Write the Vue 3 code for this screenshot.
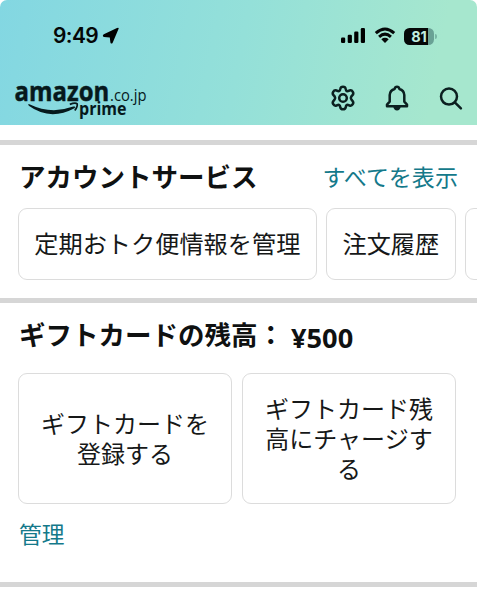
<template>
  <div class="screen">
    <header class="header">
      <!-- Status bar -->
      <div class="status">
        <div class="clock">
          <span class="time">9:49</span>
          <svg class="location" width="18" height="18" viewBox="0 0 18 18">
            <path d="M16.6 1.8 L10.8 15.4 Q9.4 17.8 8.4 15.4 L7.8 10.4 L2 10 Q-0.2 8.8 1.8 7.2 L15 1 Q17.2 0.2 16.6 1.8Z" />
          </svg>
        </div>
        <div class="indicators">
          <svg width="26" height="18" viewBox="0 0 26 18">
            <rect x="1" y="10.5" width="4.2" height="5.5" rx="1.2" />
            <rect x="7.7" y="7.8" width="4.2" height="8.2" rx="1.2" />
            <rect x="14.2" y="4.5" width="4.2" height="11.5" rx="1.2" />
            <rect x="20.8" y="1" width="4.2" height="15" rx="1.2" />
          </svg>
          <svg class="wifi" width="22" height="18" viewBox="0 0 22 18">
            <path d="M1.8 6.2 Q11 -2.1 20.2 6.2" />
            <path d="M5.1 9.8 Q11 4.5 16.9 9.8" />
            <path class="solid" d="M7.3 12.3 Q11 9.4 14.7 12.3 L11 16Z" />
          </svg>
          <div class="battery">
            <span class="level">81</span>
          </div>
          <i class="battery-tip"></i>
        </div>
      </div>

      <!-- Logo and actions -->
      <div class="nav">
        <svg class="logo" width="136" height="42" viewBox="0 0 136 42">
          <text class="brand" x="0.6" y="23" textLength="94.6" lengthAdjust="spacingAndGlyphs">amazon</text>
          <text class="domain" x="96" y="23.4" textLength="36.5" lengthAdjust="spacingAndGlyphs">.co.jp</text>
          <text class="prime" x="65" y="36.6" textLength="47.5" lengthAdjust="spacingAndGlyphs">prime</text>
          <path d="M15.4 26.3 Q37 36.7 59.3 28.6 Q62.5 27.8 60.5 30.2 Q36 43.2 14.8 27.8 Q13.4 25.5 15.4 26.3Z" />
          <path class="tip" d="M55.8 26.4 Q61.5 24.2 63.2 25.9 Q63.8 28.4 60.8 32.6" />
        </svg>
        <div class="actions">
          <svg width="28" height="28" viewBox="0 0 28 28">
            <path d="M11.2 5.1 C11.8 1.9 16.2 1.9 16.8 5.1 L17.1 6.3 Q17.7 7.4 19 7.1 L20.5 6.5 C23.4 5.6 25.5 9.2 23.3 11.3 L22.4 12.3 Q21.3 14 22.4 15.5 L23.3 16.6 C25.5 18.8 23.4 22.4 20.5 21.5 L19 20.9 Q17.6 20.6 17.1 21.8 L16.8 23 C16.2 26.1 11.8 26.1 11.2 23 L10.9 21.8 Q10.3 20.6 9 20.9 L7.5 21.5 C4.6 22.4 2.5 18.8 4.7 16.6 L5.6 15.5 Q6.7 14 5.6 12.3 L4.7 11.3 C2.5 9.2 4.6 5.6 7.5 6.5 L9 7.1 Q10.4 7.4 10.9 6.3Z" />
            <circle cx="14" cy="14" r="3.8" />
          </svg>
          <svg width="28" height="28" viewBox="0 0 28 28">
            <path d="M4 22.3 V20.6 L6.7 17.6 V11 Q7 6.4 11.6 5 Q12.1 2.7 14 2.7 Q15.9 2.7 16.4 5 Q21 6.4 21.3 11 V17.6 L24 20.6 V22.3Z" />
            <path class="clapper" d="M10.2 22.8 H17.8 Q17 26.4 14 26.4 Q11 26.4 10.2 22.8Z" />
          </svg>
          <svg width="28" height="28" viewBox="0 0 28 28">
            <circle cx="12" cy="12.6" r="8" />
            <path d="M17.8 18.3 L23.9 24.4" />
          </svg>
        </div>
      </div>
    </header>

    <section class="account">
      <div class="title-row">
        <h2>アカウントサービス</h2>
        <a class="link all">すべてを表示</a>
      </div>
      <div class="chips">
        <button v-for="item in services" :key="item" class="chip">{{ item }}</button>
        <button class="chip cut"></button>
      </div>
    </section>

    <section class="gift">
      <div class="balance">
        <h2>ギフトカードの残高：</h2>
        <span class="amount">¥500</span>
      </div>
      <div class="cards">
        <button v-for="item in giftActions" :key="item" class="card">{{ item }}</button>
      </div>
      <a class="link manage">管理</a>
    </section>
    <div class="divider"></div>
  </div>
</template>

<script setup>
const services = ['定期おトク便情報を管理', '注文履歴']
const giftActions = ['ギフトカードを登録する', 'ギフトカード残高にチャージする']
</script>

<style>
body {
  margin: 0;
  background: #fff;
}
</style>

<style scoped>
.screen {
  width: 477px;
  height: 600px;
  overflow: hidden;
  background: #fff;
  color: #0f1111;
  font-family: "Open Sans", "Noto Sans CJK JP", sans-serif;
}

.header {
  box-sizing: border-box;
  height: 125px;
  padding-top: 22px;
  border-radius: 7px 7px 0 0;
  background: linear-gradient(101deg, #83d7e2 0%, #94e0d9 50%, #a6e7ce 90%);
}

/* Status bar */
.status {
  display: flex;
  justify-content: space-between;
  align-items: center;
  height: 28px;
  padding: 0 40px 0 53px;
}

.clock,
.indicators {
  display: flex;
  align-items: center;
}

.time {
  font: 600 21px/28px Inter, sans-serif;
  color: #050808;
  width: 45px;
  letter-spacing: -0.6px;
}

.location {
  margin-left: 4px;
}

.wifi {
  margin: 0 8px 0 8px;
  fill: none;
  stroke: #050808;
  stroke-width: 3;
}

.wifi .solid {
  fill: #050808;
  stroke: none;
}

.battery {
  width: 30px;
  height: 17px;
  border-radius: 5.5px;
  background: linear-gradient(90deg, #050808 81%, #69a195 81%);
  text-align: center;
}

.level {
  display: block;
  font: 700 14.5px/17px Inter, sans-serif;
  color: #c2eee0;
}

.battery-tip {
  width: 2px;
  height: 5px;
  margin-left: 1px;
  border-radius: 0 2px 2px 0;
  background: #79b5a5;
}

/* Logo and actions */
.nav {
  display: flex;
  justify-content: space-between;
  padding: 28px 12px 0 14px;
}

.logo {
  overflow: visible;
  fill: #06191c;
}

.brand {
  font: 700 27px "Open Sans", sans-serif;
  stroke: #06191c;
  stroke-width: 0.5;
}

.domain {
  font: 400 16.5px "Open Sans", sans-serif;
}

.prime {
  font: 700 17px "Open Sans", sans-serif;
}

.tip {
  fill: none;
  stroke: #06191c;
  stroke-width: 1.7;
}

.actions {
  display: flex;
  gap: 26px;
  padding-top: 6px;
}

.actions svg {
  fill: none;
  stroke: #0b2020;
  stroke-width: 2.5;
  stroke-linejoin: round;
  stroke-linecap: round;
}

.actions .clapper {
  fill: #0b2020;
  stroke: none;
}

/* Sections */
section {
  box-sizing: border-box;
  border-top: 5px solid #d6d6d6;
}

h2 {
  margin: 0;
  font-size: 26.5px;
  line-height: 36px;
  font-weight: 700;
  white-space: nowrap;
}

.link {
  font-size: 22.7px;
  line-height: 32px;
  color: #14798a;
}

.account {
  height: 158px;
  margin-top: 15px;
  padding: 14px 0 0 18px;
}

.title-row {
  display: flex;
  justify-content: space-between;
  align-items: center;
  height: 36px;
  padding: 0 19px 0 1px;
}

.all {
  letter-spacing: 0.1px;
  font-size: 23px;
}

.chips {
  display: flex;
  gap: 9.5px;
  margin-top: 13px;
  overflow: hidden;
}

button {
  box-sizing: border-box;
  border: 1.5px solid #dcdcdc;
  border-radius: 9px;
  background: #fff;
  color: #161818;
  font-family: inherit;
  font-size: 24.2px;
}

.chip {
  flex: none;
  height: 72px;
  padding: 0 15.3px 3px;
  white-space: nowrap;
}

.chip.cut {
  width: 110px;
}

.gift {
  height: 284px;
  padding: 14px 0 0 18px;
}

.balance {
  display: flex;
  gap: 7px;
  height: 36px;
  padding-left: 1px;
}

.amount {
  padding-top: 3px;
  font-size: 27.2px;
  line-height: 36px;
  font-weight: 700;
}

.cards {
  display: flex;
  gap: 10px;
  margin-top: 20px;
}

.card {
  width: 214px;
  height: 131px;
  padding: 0 20px;
  font-size: 24px;
  line-height: 30px;
}

.manage {
  display: block;
  margin-top: 15px;
  padding-left: 1px;
}

.divider {
  height: 5px;
  background: #d6d6d6;
}
</style>
